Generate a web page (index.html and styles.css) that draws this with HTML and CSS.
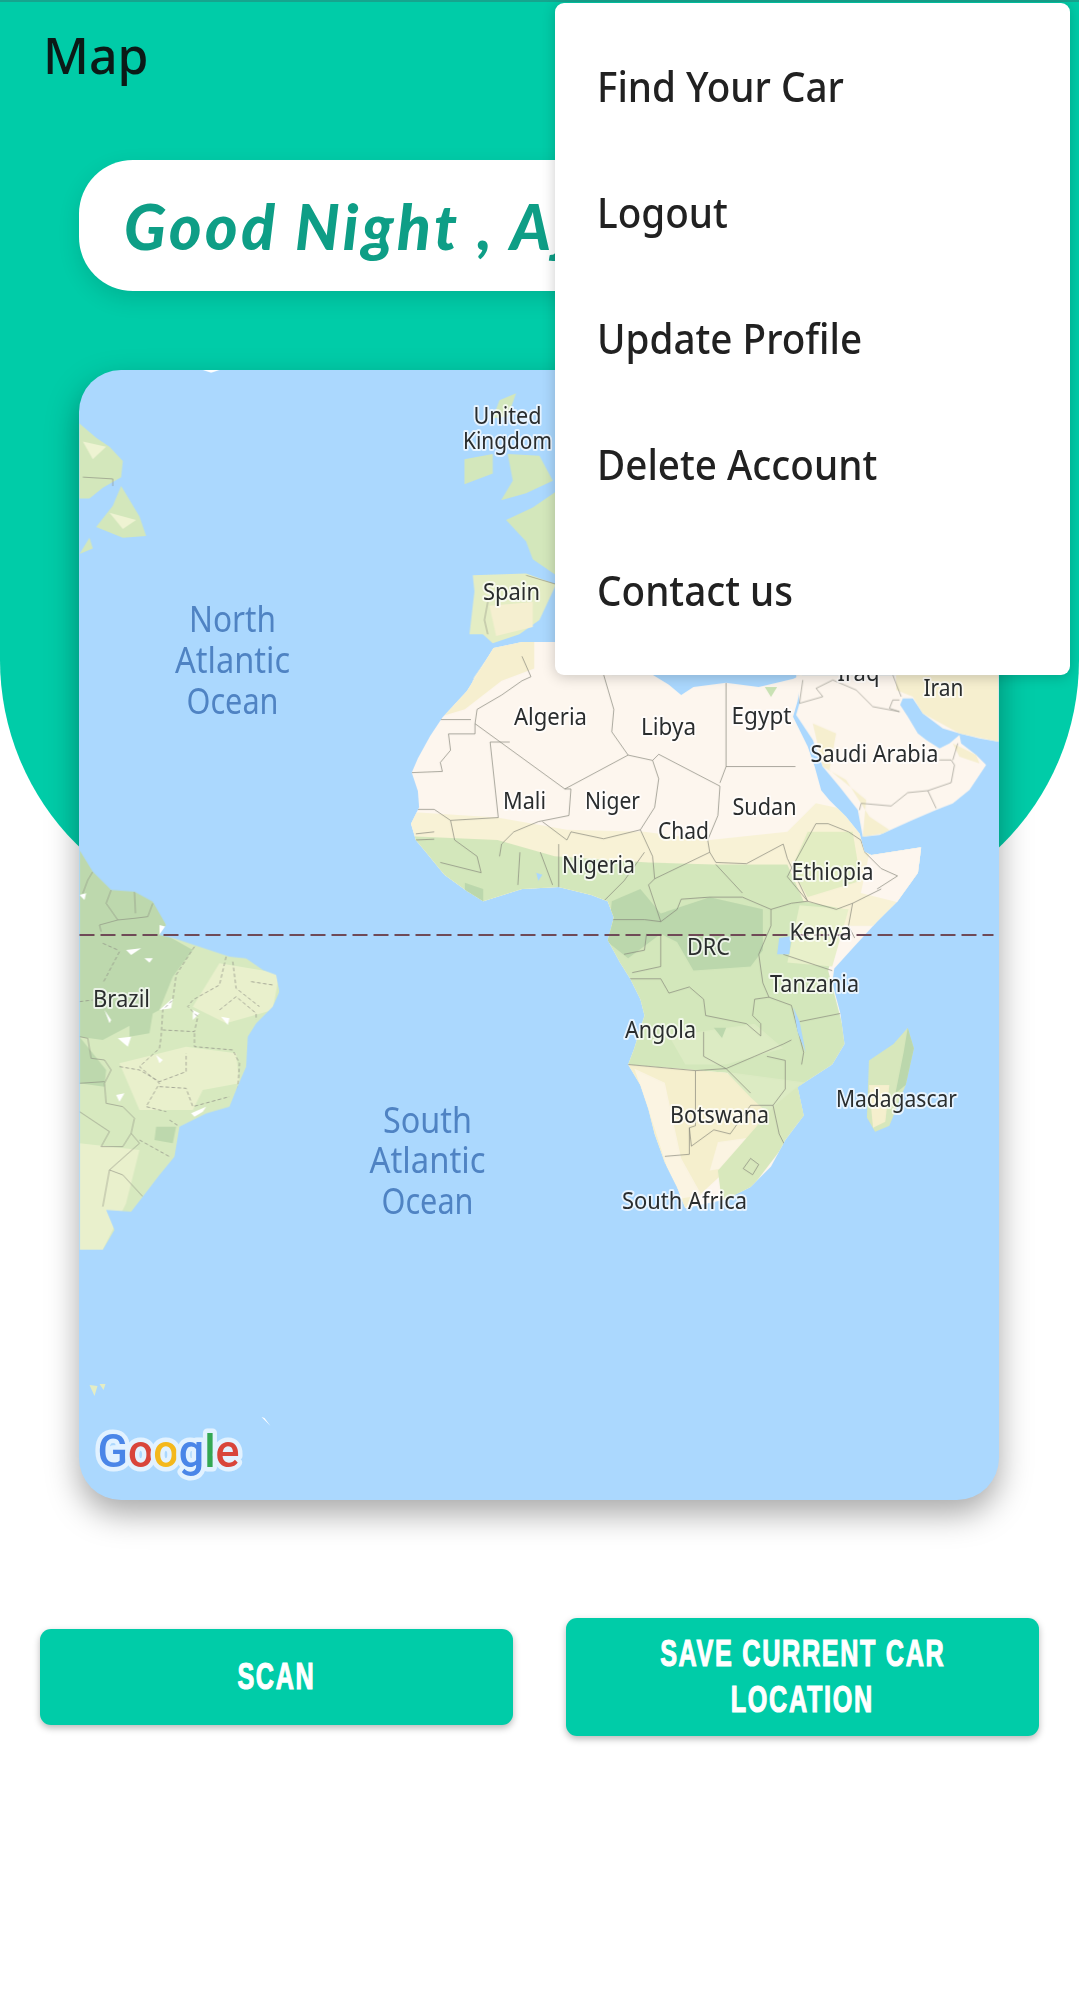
FILE: index.html
```html
<!DOCTYPE html>
<html lang="en">
<head>
  <meta charset="UTF-8" />
  <meta name="viewport" content="width=device-width, initial-scale=1" />
  <title>Map</title>
  <link rel="stylesheet" href="styles.css">
</head>
<body>
  <div class="page">
    <div class="hero">
      <h1 class="title">Map</h1>
      <div class="greeting"><span class="greeting-text">Good Night , Aj</span></div>

      <div class="map">
        <svg class="map-svg" viewBox="80 370 919 1130" xmlns="http://www.w3.org/2000/svg">
          <defs>
            <clipPath id="africaClip">
              <path id="africaShape" d="M230,20 L300,5 L380,5 L500,60 L520,85 L620,85 L660,110 L690,135 L720,115 L800,105 L880,115 L965,95 L985,85 L975,150 L964,188 L1000,261 L1017,310 L1033,368 L1053,392 L1094,433 L1127,474 L1139,519 L1156,527 L1278,508 L1270,570 L1220,640 L1170,690 L1115,750 L1065,805 L1060,840 L1080,915 L1090,990 L1060,1040 L975,1095 L990,1165 L945,1225 L910,1290 L860,1340 L800,1370 L700,1392 L680,1340 L650,1280 L625,1210 L610,1150 L590,1090 L560,1040 L575,1000 L600,920 L590,880 L565,830 L540,790 L510,735 L525,680 L510,640 L470,625 L390,605 L300,610 L205,640 L165,615 L110,575 L65,520 L40,490 L28,450 L48,410 L45,370 L30,325 L45,290 L75,235 L105,190 L165,125 L190,85 Z" />
            </clipPath>
            <clipPath id="brazilClip">
              <path d="M60,0 L100,65 L155,120 L225,125 L280,155 L320,225 L300,255 L345,265 L435,295 L510,320 L560,325 L610,360 L650,375 L660,425 L640,470 L590,520 L565,560 L560,650 L530,720 L510,770 L440,790 L360,830 L345,920 L300,975 L250,1040 L215,1085 L140,1080 L165,1140 L130,1200 L60,1200 Z" />
            </clipPath>
          </defs>

          <g class="land">
            <!-- south america -->
            <g transform="translate(60 850) scale(.3333)">
              <g clip-path="url(#brazilClip)">
                <rect x="0" y="0" width="700" height="1200" fill="#d7e9bf" />
                <path fill="#bdd8ad" d="M60,0 L320,120 L320,255 L400,300 L340,380 L300,480 L130,570 L60,560 Z" />
                <path fill="#e9f0cc" d="M180,640 L380,590 L530,610 L540,700 L430,720 L400,780 L240,780 Z" />
                <path fill="#e9f0cc" d="M480,340 L660,370 L640,480 L500,520 L400,470 Z" />
                <path fill="#e9f0cc" d="M60,880 L240,900 L200,1060 L130,1200 L60,1200 Z" />
                <path fill="#bdd8ad" d="M60,560 L140,660 L135,710 L60,700 Z M210,490 L280,490 L270,550 L210,560 Z M290,830 L350,830 L340,880 L285,870 Z" />
                <path fill="#fff" d="M60,135 L80,130 L75,150 Z M200,300 L245,295 L215,315 Z M255,325 L280,325 L270,338 Z M135,480 L155,510 L150,520 Z M175,565 L215,560 L205,590 Z M300,480 L340,445 L335,475 Z M400,480 L420,490 L400,510 Z M485,500 L510,505 L505,525 Z M290,615 L310,630 L300,640 Z M170,735 L195,730 L180,755 Z M395,790 L440,770 L430,785 L405,800 Z M300,225 L320,230 L300,255 Z" />
                <path class="border" d="M100,65 L85,90 L70,130 M155,120 L140,160 L175,210 L120,225 L125,245 M225,125 L228,190 M280,160 L265,200 L225,205 L175,210 M60,560 L85,565 L95,625 L135,630 L155,660 L135,700 L140,760 L190,770 L225,805 L215,850 L240,880 L150,960 L130,1070 M60,700 L135,695 M60,785 L150,845 L125,890 L190,890 L215,850 M150,960 L190,975 L250,1040" />
                <path class="border-dash" d="M405,290 L350,375 L340,450 L310,480 L305,560 L300,595 L240,650 L300,700 L260,770 L320,785 M500,320 L480,405 L400,450 L385,470 L415,500 L405,545 L310,540 M520,335 L530,415 L600,470 M405,550 L405,590 L520,600 L540,640 L535,720 M180,650 L240,660 L300,695 L380,665 L380,610 M300,710 L380,715 L400,770 L510,740 M180,305 L130,400 M130,280 L175,300 M60,455 L100,450 M480,480 L530,440 L590,490 L590,510 M575,395 L640,405 M330,810 L360,830 M240,870 L330,920" />
              </g>
            </g>

            <!-- canada, newfoundland, uk, iberia -->
            <g transform="translate(60 370) scale(.3333 .3571)">
              <path fill="#d3e7bb" d="M60,150 L110,190 L150,215 L190,255 L185,300 L130,330 L90,360 L60,360 Z M185,325 L240,410 L260,465 L190,470 L110,440 L160,380 Z M60,515 L90,470 L100,500 Z" />
              <path fill="#eef3d2" d="M70,200 L140,215 L100,250 Z M150,400 L230,420 L190,445 Z" />
              <path class="border" d="M70,300 L160,305 M160,305 L160,325" />
              <path fill="#fff" d="M430,0 L480,0 L455,8 Z" />
              <path fill="#d3e7bb" d="M1320,85 L1370,65 L1345,130 L1300,135 Z M1215,250 L1300,235 L1300,290 L1215,320 Z M1345,235 L1440,240 L1480,310 L1400,345 L1325,365 L1360,310 Z" />
              <path fill="#d3e7bb" d="M1340,420 L1420,385 L1490,340 L1490,575 L1420,530 L1400,480 Z" />
              <path fill="#e4edc4" d="M1240,575 L1400,570 L1490,600 L1440,700 L1380,740 L1300,765 L1270,740 L1230,740 L1245,620 Z" />
              <path fill="#f5efd0" d="M1290,660 L1420,650 L1420,720 L1310,745 Z" />
              <path class="border" d="M1400,575 L1490,600 M1285,650 L1275,700 L1285,740" />
              <path fill="#fdf5ec" d="M1305,780 L1400,790 L1490,765 L1490,860 L1415,860 L1360,900 L1320,935 L1250,945 L1225,915 L1245,860 Z" />
              <path fill="#f6efcf" d="M1305,780 L1400,800 L1415,860 L1360,900 L1225,915 L1245,860 Z" />
            </g>

            <!-- africa -->
            <g transform="translate(400 640) scale(.4082)">
              <use href="#africaShape" fill="#fdf6ee" />
              <g clip-path="url(#africaClip)">
                <path fill="#f8f2d6" d="M0,420 L240,435 L410,465 L600,470 L760,490 L950,470 L1020,400 L1300,460 L1300,700 L0,700 Z" />
                <path fill="#f6efcf" d="M160,170 L250,100 L330,70 L330,0 L150,0 L60,200 Z" />
                <path fill="#fdf6ee" d="M1150,527 L1300,500 L1250,650 L1130,620 Z" />
                <path fill="#e2edc2" d="M1000,470 L1110,470 L1130,590 L1000,630 L960,560 Z" />
                <path fill="#d3e7bb" d="M0,480 L240,490 L380,530 L610,545 L770,550 L950,550 L990,640 L1090,660 L1050,810 L1100,1000 L1000,1100 L960,1100 L800,1060 L560,1040 L500,800 L500,640 L200,650 L0,650 Z" />
                <path fill="#e8f0ca" d="M980,650 L1100,660 L1060,800 L950,790 Z" />
                <path fill="#dcebc3" d="M660,970 L870,940 L940,1000 L800,1040 L700,1040 Z" />
                <path fill="#bbd7ac" d="M520,640 L590,610 L640,670 L760,630 L890,660 L890,760 L860,800 L720,810 L680,740 L640,720 L560,780 L510,740 Z" />
                <path fill="#bbd7ac" d="M160,595 L205,610 L205,650 L160,630 Z M770,950 L800,950 L790,975 Z" />
                <path fill="#f5efcd" d="M560,1040 L800,1060 L920,1140 L930,1220 L800,1300 L700,1392 L600,1200 Z" />
                <path fill="#fbf4e2" d="M575,1050 L650,1085 L690,1270 L740,1360 L680,1370 L610,1150 Z" />
                <path fill="#fbf4e2" d="M780,1230 L850,1220 L820,1290 L760,1300 Z" />
                <path fill="#dcebc3" d="M800,1058 L1000,1085 L1000,1180 L925,1180 L860,1120 Z" />
                <path fill="#d8e8bc" d="M920,1140 L980,1090 L1000,1170 L940,1240 L860,1345 L790,1380 L780,1300 Z" />
                <path class="border" d="M100,195 L175,195 M185,205 L190,170 L250,135 L300,100 L322,90 L300,40 M185,205 L405,365 L560,282 L520,225 L525,170 L500,85 M120,230 L185,230 L185,205 M120,230 L125,270 L100,300 L105,322 L30,325 M222,250 L242,435 L125,442 L85,415 L45,415 M222,250 L270,250 M405,365 L420,365 L415,430 L340,445 L280,470 L250,500 L245,530 M560,282 L620,295 L635,340 L625,410 L590,465 L500,487 L420,470 L410,490 L350,445 M620,295 L635,280 L785,358 L780,430 L755,490 L760,520 L775,545 L850,548 L940,500 L950,535 M800,105 L800,310 L785,350 M800,310 L970,310 M590,465 L620,530 L625,585 L760,520 M625,585 L610,600 L640,690 L680,660 L690,635 L760,630 L840,630 L910,660 L960,645 L1000,640 M775,550 L840,620 M950,535 L1000,640 L1070,660 L1110,645 L1180,610 M1020,450 L1050,450 L1100,470 L1130,490 L1140,520 L1180,560 L1220,578 L1170,610 M1020,450 L960,560 L950,580 L1000,640 M1110,645 L1100,700 L1115,730 M910,660 L910,700 L880,770 L890,840 L905,875 M940,770 L1060,810 M905,875 L960,895 L990,1010 L985,1040 M980,935 L1080,915 M565,830 L640,830 L660,865 L710,850 L745,880 L750,920 L850,940 L885,970 L885,940 L865,920 L870,880 L905,875 M560,1040 L725,1055 L800,1050 L745,1020 L745,960 M800,1050 L870,1020 L940,990 L960,980 M900,1020 L945,1030 L945,1100 L915,1140 L930,1210 L945,1240 M725,1055 L725,1190 L710,1195 L715,1240 L770,1200 L810,1210 L860,1140 L915,1140 M800,1050 L860,1110 M710,1195 L710,1260 L650,1265 M860,1270 L880,1285 L865,1310 L842,1295 Z M125,442 L135,490 L190,530 L200,570 L100,545 M295,520 L290,600 M345,520 L375,600 M390,500 L390,605 M500,640 L550,590 L600,520 M520,685 L600,685 L640,690 M605,720 L600,760 L550,770 M640,720 L640,800 L570,815 M40,475 L85,470 M40,490 L85,488" />
                <path fill="#abd8fe" d="M930,730 L960,725 L955,770 L925,770 Z M965,900 L980,935 L995,1010 L975,960 Z M335,570 L350,575 L340,590 Z" />
                <path fill="#c9e2b4" d="M895,115 L925,115 L910,140 Z" />
              </g>
              <path fill="#d7e7bc" d="M1245,950 L1260,1000 L1240,1090 L1200,1190 L1165,1205 L1145,1170 L1150,1030 L1210,990 Z" />
              <path fill="#bbd7ac" d="M1245,950 L1260,1000 L1240,1090 L1215,1110 L1235,1010 Z" />
              <path fill="#f5efcd" d="M1150,1090 L1200,1090 L1190,1180 L1160,1195 Z" />
            </g>

            <!-- arabia -->
            <g transform="translate(780 660) scale(.3333)">
              <path fill="#fdf6ee" d="M50,45 L60,130 L50,165 L100,240 L130,320 L180,380 L235,450 L250,530 L300,525 L400,480 L470,450 L520,430 L570,390 L620,315 L590,285 L545,250 L540,225 L510,250 L480,265 L440,240 L415,220 L385,170 L362,135 L370,115 L400,115 L430,160 L490,205 L540,220 L600,235 L657,245 L657,45 Z" />
              <path fill="#f6efcf" d="M350,45 L657,45 L657,245 L540,220 L430,160 L400,110 L350,90 Z" />
              <path fill="#f6efcf" d="M100,190 L170,220 L150,330 L260,420 L250,530 L310,520 L330,510 L270,470 L200,360 L130,320 Z M520,250 L590,285 L600,310 L540,290 Z" />
              <path class="border" d="M70,60 L60,130 L130,110 L110,85 L160,60 L230,90 L280,140 L360,155 M360,155 L330,145 L340,120 L360,120 M245,430 L240,450 M245,430 L335,438 L385,398 L445,392 L515,368 L525,315 L515,300 L480,300 M445,392 L470,445 M535,250 L520,300 M340,45 L365,110" />
            </g>
          </g>

          <!-- equator -->
          <line class="equator" x1="80" y1="935" x2="994" y2="935" />

          <!-- small islands -->
          <path fill="#e4edc4" d="M90,1385 L95,1396 L98,1386 Z M100,1384 L106,1384 L104,1390 Z" />
          <path fill="#fff" d="M262,1417 L265,1418 L271,1426 Z" />

          <text class="ocean" x="233" y="632" textLength="87" lengthAdjust="spacingAndGlyphs">North</text>
          <text class="ocean" x="233" y="673" textLength="115" lengthAdjust="spacingAndGlyphs">Atlantic</text>
          <text class="ocean" x="233" y="714" textLength="92" lengthAdjust="spacingAndGlyphs">Ocean</text>
          <text class="ocean" x="428" y="1133" textLength="89" lengthAdjust="spacingAndGlyphs">South</text>
          <text class="ocean" x="428" y="1173" textLength="116" lengthAdjust="spacingAndGlyphs">Atlantic</text>
          <text class="ocean" x="428" y="1214" textLength="92" lengthAdjust="spacingAndGlyphs">Ocean</text>

          <text class="place" x="508" y="424" textLength="68" lengthAdjust="spacingAndGlyphs">United</text>
          <text class="place" x="508" y="449" textLength="89" lengthAdjust="spacingAndGlyphs">Kingdom</text>
          <text class="place" x="512" y="600" textLength="57" lengthAdjust="spacingAndGlyphs">Spain</text>
          <text class="place" x="551" y="725" textLength="73" lengthAdjust="spacingAndGlyphs">Algeria</text>
          <text class="place" x="669" y="735" textLength="55" lengthAdjust="spacingAndGlyphs">Libya</text>
          <text class="place" x="762" y="724" textLength="60" lengthAdjust="spacingAndGlyphs">Egypt</text>
          <text class="place" x="875" y="762" textLength="128" lengthAdjust="spacingAndGlyphs">Saudi Arabia</text>
          <text class="place" x="859" y="681" textLength="42" lengthAdjust="spacingAndGlyphs">Iraq</text>
          <text class="place" x="944" y="696" textLength="40" lengthAdjust="spacingAndGlyphs">Iran</text>
          <text class="place" x="525" y="809" textLength="43" lengthAdjust="spacingAndGlyphs">Mali</text>
          <text class="place" x="613" y="809" textLength="55" lengthAdjust="spacingAndGlyphs">Niger</text>
          <text class="place" x="765" y="815" textLength="64" lengthAdjust="spacingAndGlyphs">Sudan</text>
          <text class="place" x="684" y="839" textLength="51" lengthAdjust="spacingAndGlyphs">Chad</text>
          <text class="place" x="599" y="873" textLength="73" lengthAdjust="spacingAndGlyphs">Nigeria</text>
          <text class="place" x="833" y="880" textLength="82" lengthAdjust="spacingAndGlyphs">Ethiopia</text>
          <text class="place" x="821" y="940" textLength="62" lengthAdjust="spacingAndGlyphs">Kenya</text>
          <text class="place" x="709" y="955" textLength="43" lengthAdjust="spacingAndGlyphs">DRC</text>
          <text class="place" x="815" y="992" textLength="89" lengthAdjust="spacingAndGlyphs">Tanzania</text>
          <text class="place" x="661" y="1038" textLength="71" lengthAdjust="spacingAndGlyphs">Angola</text>
          <text class="place" x="720" y="1123" textLength="99" lengthAdjust="spacingAndGlyphs">Botswana</text>
          <text class="place" x="897" y="1107" textLength="121" lengthAdjust="spacingAndGlyphs">Madagascar</text>
          <text class="place" x="685" y="1209" textLength="125" lengthAdjust="spacingAndGlyphs">South Africa</text>
          <text class="place" x="122" y="1007" textLength="57" lengthAdjust="spacingAndGlyphs">Brazil</text>

          <text class="google" x="98" y="1467" textLength="142" lengthAdjust="spacingAndGlyphs"><tspan fill="#4a86e8">G</tspan><tspan fill="#d9453a">o</tspan><tspan fill="#f4b81c">o</tspan><tspan fill="#4a86e8">g</tspan><tspan fill="#34a853">l</tspan><tspan fill="#d9453a">e</tspan></text>
        </svg>
      </div>
    </div>

    <div class="actions">
      <button class="btn" type="button"><span class="btn-line">SCAN</span></button>
      <button class="btn" type="button">
        <span class="btn-line">SAVE CURRENT CAR</span>
        <span class="btn-line">LOCATION</span>
      </button>
    </div>

    <ul class="menu">
      <li class="menu-item"><span class="menu-label">Find Your Car</span></li>
      <li class="menu-item"><span class="menu-label">Logout</span></li>
      <li class="menu-item"><span class="menu-label">Update Profile</span></li>
      <li class="menu-item"><span class="menu-label">Delete Account</span></li>
      <li class="menu-item"><span class="menu-label">Contact us</span></li>
    </ul>
  </div>
</body>
</html>
```

FILE: styles.css
```css
body {
  margin: 0;
  background: #fff;
  font-family: "Noto Sans", sans-serif;
}

.page {
  position: relative;
  width: 1079px;
  height: 2013px;
  overflow: hidden;
}

.hero {
  box-sizing: border-box;
  height: 920px;
  padding: 20px 80px 0 79px;
  background: #00cca8;
  border-top: 2px solid #16a48e;
  border-radius: 0 0 260px 260px;
}

.title {
  margin: 0 0 0 -36px;
  height: 138px;
  font-size: 50px;
  font-weight: 500;
  line-height: 66px;
  color: #0b1a17;
}

.greeting {
  display: flex;
  align-items: center;
  height: 131px;
  padding-left: 45px;
  background: #fff;
  border-radius: 54px;
  box-shadow: 0 8px 22px rgba(0, 0, 0, 0.12);
  overflow: hidden;
}

.greeting-text {
  font-family: "Lato", sans-serif;
  font-size: 62px;
  font-style: italic;
  font-weight: 900;
  letter-spacing: 3.5px;
  white-space: nowrap;
  color: #0e9e86;
}

.map {
  height: 1130px;
  margin-top: 79px;
  background: #abd8fe;
  border-radius: 42px;
  box-shadow: 0 14px 32px rgba(0, 0, 0, 0.34);
  overflow: hidden;
}

.map-svg {
  display: block;
  width: 100%;
  height: 100%;
}

/* terrain in the reference is soft, labels are not */
.land {
  filter: blur(0.6px);
}

.border,
.border-dash {
  fill: none;
  stroke: #85857a;
  stroke-width: 1.7;
}

.border-dash {
  stroke: #8f8f85;
  stroke-width: 2.2;
  stroke-dasharray: 11 7;
}

.equator {
  stroke: #6f4a57;
  stroke-width: 2;
  stroke-dasharray: 15 6;
}

.place,
.ocean {
  text-anchor: middle;
  font-family: "Noto Sans", sans-serif;
}

.place {
  font-size: 24px;
  fill: #2a2d2e;
  stroke: rgba(255, 255, 255, 0.7);
  stroke-width: 4px;
  stroke-linejoin: round;
  paint-order: stroke;
}

.ocean {
  font-size: 36px;
  fill: #4f83c3;
}

.google {
  font-family: "Roboto", sans-serif;
  font-size: 46px;
  font-weight: 500;
  stroke: #e2f2ff;
  stroke-width: 9px;
  stroke-linejoin: round;
  paint-order: stroke;
}

.actions {
  display: flex;
  align-items: center;
  gap: 53px;
  height: 118px;
  margin-top: 698px;
  padding: 0 40px;
}

.btn {
  display: flex;
  flex: 0 0 473px;
  flex-direction: column;
  align-items: center;
  justify-content: center;
  gap: 6px;
  min-height: 96px;
  padding: 16px 0;
  background: #00cca8;
  border: none;
  border-radius: 11px;
  box-shadow: 0 3px 7px rgba(0, 0, 0, 0.28);
}

.btn-line {
  display: block;
  font-family: "Liberation Sans", sans-serif;
  font-size: 37px;
  font-weight: 700;
  letter-spacing: 2.5px;
  line-height: 40px;
  white-space: nowrap;
  color: #fff;
  -webkit-text-stroke: 1.2px #fff;
  transform: scaleX(0.68);
}

/* popup menu sits over the page */
.menu {
  position: absolute;
  top: 3px;
  left: 555px;
  width: 515px;
  margin: 0;
  padding: 19px 0 23px;
  list-style: none;
  background: #fff;
  border-radius: 9px;
  box-shadow: 0 2px 14px rgba(0, 0, 0, 0.2);
}

.menu-item {
  display: flex;
  align-items: center;
  height: 126px;
  padding-left: 42px;
}

.menu-label {
  font-size: 42px;
  font-weight: 500;
  white-space: nowrap;
  color: #212121;
  transform: scaleX(0.92);
  transform-origin: left center;
}
```
